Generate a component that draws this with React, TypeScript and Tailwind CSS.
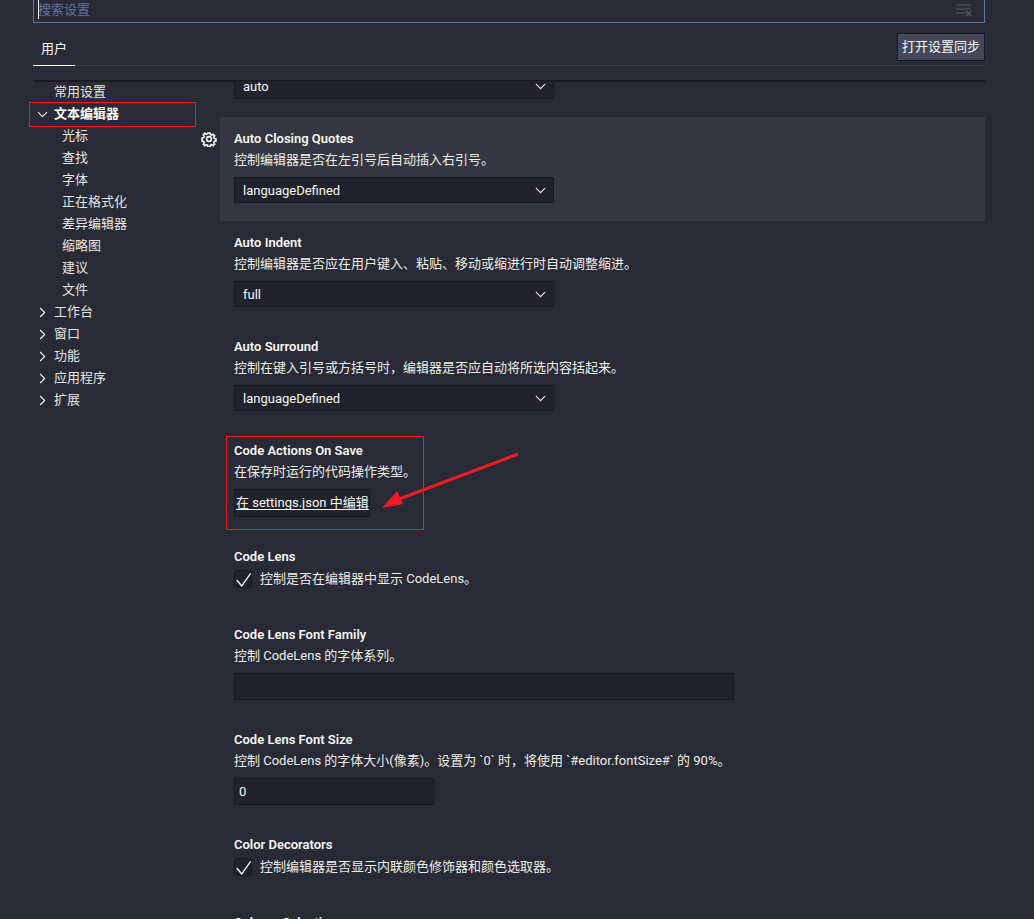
import { ChevronDown, ChevronRight } from "lucide-react";

const sans = "font-['Roboto','Noto_Sans_CJK_SC',sans-serif]";

const subItems = ["光标", "查找", "字体", "正在格式化", "差异编辑器", "缩略图", "建议", "文件"];
const groups = ["工作台", "窗口", "功能", "应用程序", "扩展"];

function SelectBox({ value }: { value: string }) {
	return (
		<div className="w-[320px] h-[26px] flex items-center justify-between pl-[8px] pr-[4px] bg-[#21222c] border border-[#191a21] text-[#f8f8f2]">
			<span className="pt-[1px]">{value}</span>
			<ChevronDown size={17} strokeWidth={1.5} />
		</div>
	);
}

function Title({ children }: { children: string }) {
	return <div className="h-[20px] leading-[20px] font-semibold text-[#f8f8f2]">{children}</div>;
}

function Desc({ children }: { children: string }) {
	return <div className="h-[20px] leading-[22px] text-[#eeeee8]">{children}</div>;
}

function SelectSetting({ title, desc, value, active }: { title: string; desc: string; value: string; active?: boolean }) {
	return (
		<div className={`relative h-[104px] pt-[12px] pl-[14px] ${active ? "bg-[#343741]" : ""}`}>
			<Title>{title}</Title>
			<Desc>{desc}</Desc>
			<div className="mt-[8px]">
				<SelectBox value={value} />
			</div>
		</div>
	);
}

function CheckSetting({ title, desc, height }: { title: string; desc: string; height: string }) {
	return (
		<div className={`pt-[12px] pl-[14px] ${height}`}>
			<Title>{title}</Title>
			<div className="flex items-center gap-[8px] h-[20px] mt-[2px]">
				<div className="w-[18px] h-[18px] rounded-[3px] bg-[#21222c] border border-[#191a21]">
					<svg width="16" height="16" viewBox="0 0 16 16" fill="none" stroke="#f8f8f2" strokeWidth="1.3">
						<path d="M1.7 9l5 6L15.7 2.3" />
					</svg>
				</div>
				<span className="text-[#eeeee8]">{desc}</span>
			</div>
		</div>
	);
}

function InputSetting({ title, desc, value, width, height }: { title: string; desc: string; value: string; width: string; height: string }) {
	return (
		<div className={`pt-[12px] pl-[14px] ${height}`}>
			<Title>{title}</Title>
			<Desc>{desc}</Desc>
			<div className={`mt-[8px] h-[27px] flex items-center pl-[4px] pt-[1px] bg-[#21222c] border border-[#191a21] text-[#f8f8f2] ${width}`}>
				{value}
			</div>
		</div>
	);
}

export default function App() {
	return (
		<div className={`relative w-[1034px] h-[919px] overflow-hidden bg-[#282a36] text-[13px] ${sans}`}>
			<div className="ml-[33px] w-[952px]">
				{/* search box, its top edge is cut off */}
				<div className="h-[23px] flex items-center justify-between border-x border-b border-[#6272a4] pl-[4px] pr-[12px]">
					<div className="flex items-center text-[#6272a4] -mt-[3px]">
						<span className="w-px h-[19px] bg-[#f8f8f2] -mr-px" />
						搜索设置
					</div>
					<svg width="16" height="12" viewBox="0 0 16 12" className="text-[#565866] -mt-[3px]">
						<path d="M0 1h15M0 5h15M0 9h10" stroke="currentColor" fill="none" />
						<path d="M10 7l5 5M15 7l-5 5" stroke="currentColor" strokeWidth="1.5" fill="none" />
					</svg>
				</div>

				{/* tabs */}
				<div className="h-[43px] flex items-start justify-between border-b border-[#3d3f49]">
					<div className="h-[43px] w-[42px] flex items-center justify-center pt-[9px] border-b border-[#f8f8f2] text-[#f8f8f2]">
						用户
					</div>
					<button className="mt-[10px] w-[88px] h-[28px] flex items-center justify-center bg-[#44475a] border border-[#191a21] text-[#f8f8f2]">
						打开设置同步
					</button>
				</div>

				<div className="mt-[14px] h-[2px] bg-[#191a21]" />

				<div className="flex h-[840px] overflow-hidden -mt-px">
					{/* tree */}
					<div className="w-[187px] shrink-0 text-[#e6e6e0]">
						<div className="h-[22px] leading-[22px] pl-[21px]">常用设置</div>
						<div className="h-[22px] flex items-center pl-[1px] font-bold text-white">
							<ChevronDown size={17} strokeWidth={1.5} className="text-[#f8f8f2] mr-[3px] shrink-0" />
							<span>文本编辑器</span>
						</div>
						{subItems.map((item) => (
							<div key={item} className="h-[22px] leading-[22px] pl-[29px]">
								{item}
							</div>
						))}
						{groups.map((item) => (
							<div key={item} className="h-[22px] flex items-center pl-[1px]">
								<ChevronRight size={17} strokeWidth={1.5} className="text-[#f8f8f2] mr-[3px] shrink-0" />
								<span>{item}</span>
							</div>
						))}
					</div>

					{/* settings list */}
					<div className="flex-1 min-w-0 -mt-[8px]">
						<div className="pl-[14px] pb-[18px]">
							<SelectBox value="auto" />
						</div>
						<div className="relative">
							<svg width="16" height="16" viewBox="0 0 16 16" className="absolute -left-[19px] top-[14px] text-[#f8f8f2]" fill="none" stroke="currentColor">
								<circle cx="8" cy="8" r="2.4" strokeWidth="1.6" />
								<path
									strokeWidth="1.9"
									d="M6.7 1h2.6l.4 2 1.4.6 1.7-1.1 1.8 1.8-1.1 1.7.6 1.4 2 .4v2.6l-2 .4-.6 1.4 1.1 1.7-1.8 1.8-1.7-1.1-1.4.6-.4 2H6.7l-.4-2-1.4-.6-1.7 1.1-1.8-1.8 1.1-1.7-.6-1.4-2-.4V6.7l2-.4.6-1.4-1.1-1.7 1.8-1.8 1.7 1.1 1.4-.6z"
									transform="translate(1.1 1.1) scale(.86)"
								/>
							</svg>
							<SelectSetting active title="Auto Closing Quotes" desc="控制编辑器是否在左引号后自动插入右引号。" value="languageDefined" />
						</div>
						<SelectSetting title="Auto Indent" desc="控制编辑器是否应在用户键入、粘贴、移动或缩进行时自动调整缩进。" value="full" />
						<SelectSetting title="Auto Surround" desc="控制在键入引号或方括号时，编辑器是否应自动将所选内容括起来。" value="languageDefined" />

						<div className="h-[106px] pt-[12px] pl-[14px]">
							<Title>Code Actions On Save</Title>
							<Desc>在保存时运行的代码操作类型。</Desc>
							<div className="mt-[8px] w-[136px] h-[28px] flex items-center pl-[1px] whitespace-nowrap bg-[#21222c] border border-[#191a21] text-[#f8f8f2] underline underline-offset-2">
								在 settings.json 中编辑
							</div>
						</div>

						<CheckSetting height="h-[78px]" title="Code Lens" desc="控制是否在编辑器中显示 CodeLens。" />
						<InputSetting height="h-[105px]" width="w-[500px]" title="Code Lens Font Family" desc="控制 CodeLens 的字体系列。" value="" />
						<InputSetting height="h-[105px]" width="w-[200px]" title="Code Lens Font Size" desc="控制 CodeLens 的字体大小(像素)。设置为 `0` 时，将使用 `#editor.fontSize#` 的 90%。" value="0" />
						<CheckSetting height="h-[78px]" title="Color Decorators" desc="控制编辑器是否显示内联颜色修饰器和颜色选取器。" />
						<div className="pt-[12px] pl-[14px]">
							<Title>Column Selection</Title>
						</div>
					</div>
				</div>
			</div>

			{/* red annotations drawn over the screenshot */}
			<div className="absolute left-[29px] top-[102px] w-[167px] h-[25px] border border-[#ed1c24]" />
			<div className="absolute left-[226px] top-[436px] w-[198px] h-[94px] border border-[#ed1c24]" />
			<svg width="160" height="70" viewBox="0 0 160 70" className="absolute left-[370px] top-[447px]">
				<path d="M148 7L24 54" stroke="#ed1c24" strokeWidth="3" fill="none" />
				<path d="M12 61L27 44L33 57Z" fill="#ed1c24" />
			</svg>
		</div>
	);
}
